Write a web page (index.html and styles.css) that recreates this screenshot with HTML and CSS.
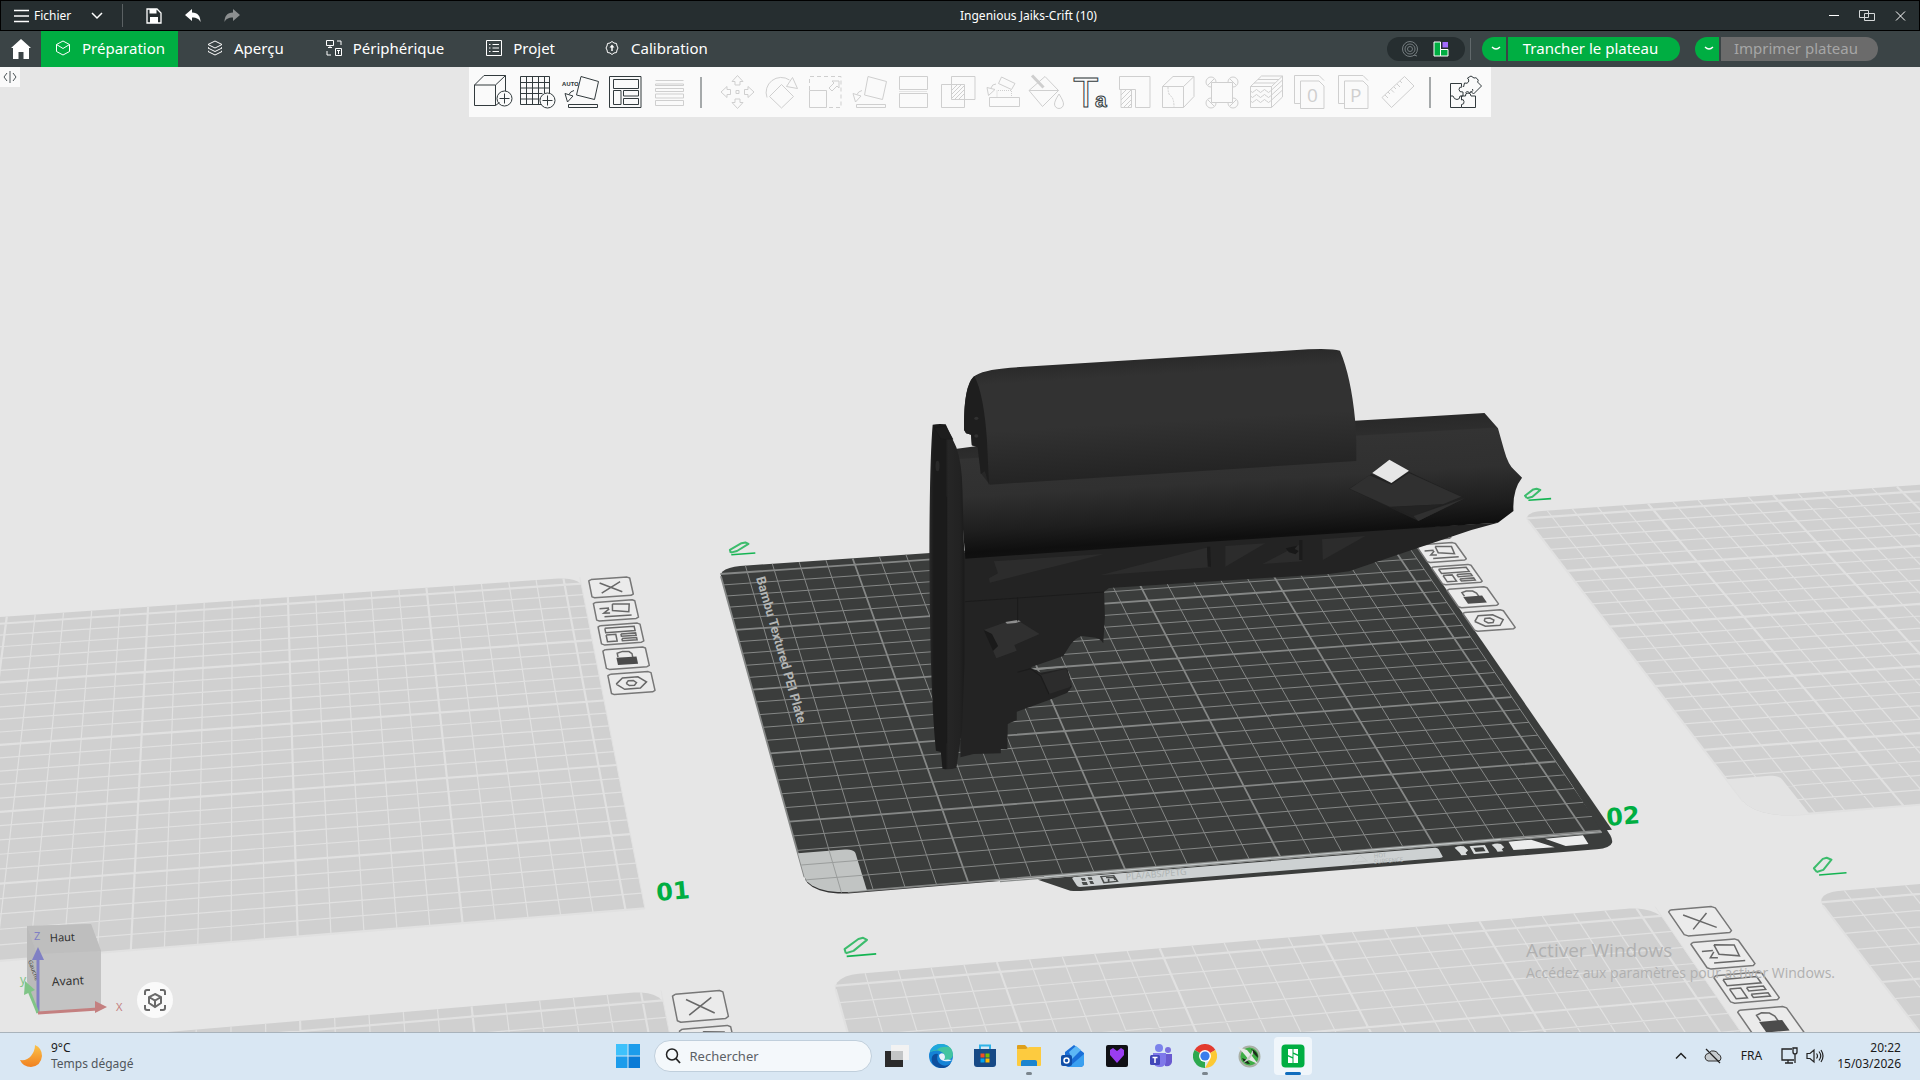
FILE: index.html
```html
<!DOCTYPE html>
<html lang="fr">
<head>
<meta charset="utf-8">
<title>Ingenious Jaiks-Crift (10)</title>
<link rel="stylesheet" href="styles.css">
</head>
<body>
<header class="titlebar">
  <div class="title-left">
    <button class="file-btn"><svg width="16" height="14" viewBox="0 0 16 14"><path d="M0 1.500h15M0 7h15M0 12.500h15" stroke="#fff" stroke-width="1.300"/></svg>Fichier</button>
    <button class="plain chev" aria-label="Menu"><svg width="12" height="8" viewBox="0 0 12 8"><path d="M1 1l5 5 5-5" fill="none" stroke="#fff" stroke-width="1.500"/></svg></button>
    <span class="title-sep"></span>
    <button class="plain save" aria-label="Enregistrer"><svg width="16" height="16" viewBox="0 0 16 16"><path d="M1 1h10l4 4v10H1z" fill="none" stroke="#fff" stroke-width="1.300"/><path d="M3.500 1h7v4.500h-7zM4 9h8v6H4z" fill="#fff"/></svg></button>
    <button class="plain undo" aria-label="Annuler"><svg width="16" height="14" viewBox="0 0 16 14"><path d="M0 6l7-6v3.500c6 0 8.500 4 8.500 9.500C14 10 12 8.500 7 8.500V12z" fill="#fff"/></svg></button>
    <button class="plain redo" aria-label="Rétablir" disabled><svg width="16" height="14" viewBox="0 0 16 14"><path d="M16 6L9 0v3.500C3 3.500.5 7.500.5 13 2 10 4 8.500 9 8.500V12z" fill="#8c8f90"/></svg></button>
  </div>
  <h1 class="doc-title">Ingenious Jaiks-Crift (10)</h1>
  <div class="win-controls">
    <button class="plain" aria-label="Réduire"><svg width="16" height="16" viewBox="0 0 16 16"><path d="M3 7.500h10" stroke="#fff"/></svg></button>
    <button class="plain" aria-label="Restaurer"><svg width="16" height="16" viewBox="0 0 16 16"><path d="M.5 2.500h9v7h-9zM5.500 5.500h10v7h-10z" fill="none" stroke="#d5d8d9"/></svg></button>
    <button class="plain" aria-label="Fermer"><svg width="16" height="16" viewBox="0 0 16 16"><path d="M4 3.500l9 9m0-9l-9 9" stroke="#fff"/></svg></button>
  </div>
</header>
<nav class="navbar">
  <button class="plain home" aria-label="Accueil"><svg width="20" height="20" viewBox="0 0 20 20"><path d="M10 0L0 9h2v11h5.500v-7h5v7H18V9h2z" fill="#fff"/></svg></button>
  <div class="tabs">
    <button class="tab active"><svg width="16" height="16" viewBox="0 0 16 16"><path d="M8 1l6.500 3.500v7L8 15l-6.500-3.500v-7zM1.500 4.500L8 8.500l6.500-4"/></svg>Préparation</button>
    <button class="tab"><svg width="16" height="16" viewBox="0 0 16 16"><path d="M8 1l7 3.500L8 8 1 4.500zM2 7.500L1 8l7 3.500L15 8l-1-.5M2 11l-1 .5L8 15l7-3.500-1-.5"/></svg>Aperçu</button>
    <button class="tab"><svg width="16" height="16" viewBox="0 0 16 16"><path d="M.5.5h7v5h-7zM4 5.500v2M2 7.500h4M11 1h4v4M1 11v4h4M9.500 8.500h6v7h-6zM11 10.500h3M12.500 11v3"/></svg>Périphérique</button>
    <button class="tab"><svg width="16" height="16" viewBox="0 0 16 16"><path d="M.5.5h15v15H.5zM3 4.500h1.500m2 0H13M3 8h1.500m2 0H13M3 11.500h1.500m2 0H13"/></svg>Projet</button>
    <button class="tab"><svg width="16" height="16" viewBox="0 0 16 16"><path d="M8 1.500l2 1.500 2.500.5.5 2.500 1 2-1 2-.5 2.500L10 13l-2 1.500L6 13l-2.500-.5L3 10 2 8l1-2 .5-2.500L6 3z"/><path d="M8 11V7" stroke-width="1.500"/><path d="M5.500 7.500L8 4.500l2.500 3z" fill="#fff" stroke="none"/></svg>Calibration</button>
  </div>
  <div class="nav-actions">
    <div class="mode">
      <button class="plain" aria-label="Mode simple"><svg width="18" height="18" viewBox="0 0 18 18" fill="none" stroke="#747c7f"><circle cx="9" cy="9" r="7.500"/><circle cx="9" cy="9" r="5"/><circle cx="9" cy="9" r="2.500"/><path d="M13 15l3 1"/></svg></button>
      <button class="plain" aria-label="Mode avancé"><svg width="16" height="16" viewBox="0 0 16 16"><path d="M1 1h6.500v14H1z" fill="#00ae42" stroke="#fff"/><path d="M7.500 8.500H15V15H7.500z" fill="#00ae42" stroke="#fff"/><path d="M9.500 1H15v5.500H9.500z" fill="#a56bff"/></svg></button>
    </div>
    <span class="nav-sep"></span>
    <div class="split">
      <button class="split-arrow" aria-label="Options de tranchage"><svg width="10" height="6" viewBox="0 0 10 6"><path d="M1 1q4 4 8 0" fill="none" stroke="#fff" stroke-width="1.300"/></svg></button>
      <button class="split-main">Trancher le plateau</button>
    </div>
    <div class="split print">
      <button class="split-arrow" aria-label="Options d’impression"><svg width="10" height="6" viewBox="0 0 10 6"><path d="M1 1q4 4 8 0" fill="none" stroke="#fff" stroke-width="1.300"/></svg></button>
      <button class="split-main" disabled>Imprimer plateau</button>
    </div>
  </div>
</nav>
<main class="stage">
  <svg class="scene" viewBox="0 67 1920 965" preserveAspectRatio="xMidYMid slice" role="img" aria-label="Vue 3D du plateau">
    <defs>
      <linearGradient id="tube" gradientUnits="userSpaceOnUse" x1="800" y1="296" x2="825" y2="645">
        <stop offset="0" stop-color="#292929"/><stop offset=".12" stop-color="#2d2d2d"/><stop offset=".13" stop-color="#333"/><stop offset=".45" stop-color="#303030"/><stop offset=".75" stop-color="#1e1e1e"/><stop offset=".93" stop-color="#0f0f0f"/><stop offset="1" stop-color="#111"/>
      </linearGradient>
      <linearGradient id="cheek" gradientUnits="userSpaceOnUse" x1="650" y1="80" x2="675" y2="430">
        <stop offset="0" stop-color="#292929"/><stop offset=".15" stop-color="#323232"/><stop offset=".55" stop-color="#323232"/><stop offset="1" stop-color="#242424"/>
      </linearGradient>
      <linearGradient id="butt" gradientUnits="userSpaceOnUse" x1="72" y1="0" x2="160" y2="0">
        <stop offset="0" stop-color="#2a2a2a"/><stop offset=".12" stop-color="#1b1b1b"/><stop offset=".45" stop-color="#1b1b1b"/><stop offset=".52" stop-color="#262626"/><stop offset=".85" stop-color="#222"/><stop offset="1" stop-color="#191919"/>
      </linearGradient>
    </defs>
    <g id="beds"></g>

    <g transform="translate(1000 780) scale(.420918 .333333)">
      <path d="M90 299l77 33q10 2 25 1L1418 208q32-4 36-20 2-8-4-22L1363 0 1352 0 1430 157 105 296z" fill="#3b3d3c"/>
      <path d="M105 291L1190 178" stroke="#c3c8c8" stroke-width="4"/>
      <path d="M0 305L1430 157" stroke="#8a8d8c" stroke-width="4"/>
      <path d="M176 291L1034 203q6 0 8 5l10 22q0 3-8 4L190 321q-6 0-8-5l-10-20q-1-4 4-5z" fill="#cdd1d2"/>
      <path d="M192 294h10l2 8h-9zM208 292h10l2 7h-9zM194 306h12l3 9h-12zM212 303h8l4 9h-9z" fill="#4a4d4c"/>
      <path d="M240 290l30-3 9 17-32 4zM252 293l18-1 4 8M258 296v10" fill="none" stroke="#4a4d4c" stroke-width="4"/>
      <path d="M855 225l-18 22 36-4z" fill="none" stroke="#c0c5c5" stroke-width="2"/>
      <path d="M1080 203q8-8 22-4l10 12-6 8 4 6-14 1-4-8zM1168 194q12-6 22-2l8 10-6 6 4 6-14 1-4-8z" fill="#dadddd"/>
      <path d="M1120 201l30-3 8 18-30 3z" fill="none" stroke="#dadddd" stroke-width="6"/>
      <path d="M1208 185l54-6 56 23-98 8zM1295 176l90-10 13 26-54 6z" fill="#eceded"/>
    </g>
    <text class="bed-mark" transform="translate(1126 880) rotate(-5)" font-size="9">PLA/ABS/PETG</text>
    <text class="bed-mark" transform="translate(1374 858) rotate(-5)" font-size="6">HOT</text>
    <text class="bed-mark" transform="translate(1374 864) rotate(-5)" font-size="6">SURFENCE</text>
    <text class="bed-name" transform="translate(756 578) rotate(74)" font-size="13">Bambu Textured PEI Plate</text>
    <text class="bed-no" transform="translate(657 901) rotate(-5)">01</text>
    <text class="bed-no" transform="translate(1607 826) rotate(-5)">02</text>

    <g transform="translate(900 330) scale(.408163 .333333)">
      <path d="M150 670L1465 578 1400 600 1230 670 1100 724 1050 732 512 774 500 785 502 860 498 940Q490 922 470 922L445 918Q425 926 412 955L400 978 320 1012 345 1028 410 1014 421 1070 410 1088 370 1108 286 1145 286 1170 264 1182 263 1257 247 1257 247 1270 180 1272 148 1282z" fill="#232323"/>
      <path d="M230 694L500 672 220 758 218 745 240 730zM490 736L755 652 752 680 760 712zM797 648L895 640 797 710zM1034 628L1140 618 1036 690zM888 702L985 640 980 670 985 694z" fill="#2c2c2c"/>
      <path d="M752 650h8l2 60h-8zM978 630h8v60h-8z" fill="#1b1b1b"/>
      <path d="M945 655l28-8-6 10 10 6-8 10-16-6z" fill="#181818"/>
      <path d="M205 900L255 878 295 876 342 912 280 945 286 962 236 985 228 962 240 948 225 912z" fill="#303030"/>
      <path d="M258 876l30-6 8 4-12 5-22 2z" fill="#8e8e8e"/>
      <path d="M205 900l20 12 15 36-12 14z" fill="#1a1a1a"/>
      <path d="M288 802v72M160 815l340-29" stroke="#181818" stroke-width="2"/>
      <path d="M320 1018l25 18 20 56 50-20 6-10-14-46-60 18z" fill="#2c2c2c"/>
      <path d="M318 1016l80-7 2 3-60 8z" fill="#8c8e8d"/>
      <path d="M288 1027l32-11 25 22 20 54" fill="none" stroke="#1c1c1c" stroke-width="3"/>
      <path d="M135 357L190 348 1115 272 1432 249 1465 295 1480 360Q1490 405 1505 420L1524 443Q1500 480 1503 543L1465 578 1300 592 700 640 160 686 148 500z" fill="url(#tube)"/>
      <path d="M220 464L1118 393 1118 330 1115 270Q1105 140 1078 62 1060 55 1000 58L270 113Q200 120 180 140 155 170 157 300L162 310 174 314 176 346 192 350 198 430z" fill="url(#cheek)"/>
      <path d="M182 138Q155 170 157 300L162 310 174 314 176 346 190 352 198 432 208 424 218 464 213 330Q205 190 182 138z" fill="#1e1e1e"/>
      <circle cx="187" cy="265" r="5" fill="#313131"/><circle cx="187" cy="318" r="5" fill="#313131"/>
      <path d="M1155 432L1100 476 1270 573 1384 505 1247 425 1204 459z" fill="#222"/>
      <path d="M1150 436L1102 476 1200 530 1330 523 1375 500 1247 429 1204 464z" fill="#303030"/>
      <path d="M1205 532L1330 523 1258 558z" fill="#232323"/>
      <path d="M1258 558L1384 505 1270 573z" fill="#303030"/>
      <path d="M1199 389L1247 422 1204 459 1157 429z" fill="#e6e6e6"/>
      <path d="M80 284Q95 280 112 283L138 352Q152 400 153 480L158 700V1000L152 1200 138 1314Q120 1320 104 1316L100 1266 88 1262Q74 1100 72 700 72 400 80 284z" fill="url(#butt)"/>
      <path d="M84 294l28-6 18 40-30-1zM114 500V1240" fill="#1d1d1d" stroke="#161616"/>
      <ellipse cx="92" cy="408" rx="5" ry="16" fill="#292929"/>
    </g>

    <g class="gizmo">
      <path d="M27 926l64-2 10 27v57l-63 5-11-32z" fill="#c3c3c3"/>
      <path d="M27 926l64-2 10 27-64 3z" fill="#bebebe"/>
      <path d="M27 926l10 28 1 59-11-32z" fill="#bababa"/>
      <text transform="translate(50 942) rotate(-3)" font-size="11" fill="#333">Haut</text>
      <text transform="translate(52 986) rotate(-3)" font-size="12" fill="#333">Avant</text>
      <text transform="translate(28 961) rotate(70)" font-size="6" fill="#444">Gauche</text>
      <path d="M38 1013V955" stroke="#8080c4" stroke-width="3"/><path d="M38 947l6 13H32z" fill="#8080c4"/>
      <path d="M38 1013l-9-22" stroke="#80c487" stroke-width="3"/><path d="M25 981l10 9-11 5z" fill="#80c487"/>
      <path d="M38 1013l60-4" stroke="#c48080" stroke-width="3"/><path d="M107 1007l-12-6v12z" fill="#c48080"/>
      <text x="34" y="940" font-size="11" fill="#8080c4">Z</text><text x="116" y="1011" font-size="11" fill="#c48080">X</text><text x="20" y="984" font-size="12" fill="#80c487">y</text>
    </g>
    <g class="watermark"><text x="1526" y="957" font-size="19">Activer Windows</text><text x="1526" y="978" font-size="14">Accédez aux paramètres pour activer Windows.</text></g>
  </svg>
  <div class="stage-top">
    <button class="expander" aria-label="Afficher le panneau"><svg width="14" height="12" viewBox="0 0 14 12"><path d="M4 2L1 6l3 4M7 0v12M10 2l3 4-3 4" fill="none" stroke="#4a5356"/></svg></button>
    <div class="toolbar" role="toolbar">
      <button aria-label="Ajouter"><svg viewBox="0 0 40 40"><path d="M1.500 13h21v20.500h-21zM1.500 13l9.500-9.500h21.500L22.500 13M32.500 3.500V19M22.500 33.500l4-3"/><circle cx="31.500" cy="26.500" r="7.500"/><path d="M26.500 26.500h10m-5-5v10"/></svg></button>
      <button aria-label="Ajouter un plateau"><svg viewBox="0 0 40 40"><path d="M3.500 4.500h29v28h-29zM9.500 4.500v28m6-28v28m6-28v28m6-28v17M3.500 10.500h29m-29 5.500h29m-29 5.500h22m-22 5.500h19"/><circle cx="30.500" cy="28.500" r="7.500" fill="#fafafa"/><path d="M25.500 28.500h10m-5-5v10"/></svg></button>
      <button aria-label="Orientation automatique"><svg viewBox="0 0 40 40"><path d="M20 4.500l17.500 5-4 18-18-4.500zM7.500 32.500h29v3h-29zM13 18.500q-4 1-5 4M4 21.500l8 2.500-5.500 6z"/><text class="micro" x="1" y="14" font-size="6">AUTO</text></svg></button>
      <button aria-label="Organiser"><svg viewBox="0 0 40 40"><path d="M4.500 4.500h31.500v31H4.500zM8.500 7.500h25v9h-25zM8.500 18.500H16v14H8.500zM18.500 18.500h15V24h-15zM18.500 26.500h15v6h-15z"/></svg></button>
      <button class="off" aria-label="Couches variables" disabled><svg viewBox="0 0 40 40"><path d="M6.500 8.500h28M6.500 12h28v1.500h-28zM6.500 16.500h28v3h-28zM6.500 22h28v4h-28zM6.500 28.500h28v5h-28z"/></svg></button>
      <span class="tool-sep"></span>
      <button class="off" aria-label="Déplacer" disabled><svg viewBox="0 0 40 40"><path d="M18 18.500h3v3h-3zM19.500 3.500l5.500 6h-3V13h-5V9.500h-3zM19.500 36.500l5.500-6h-3V27h-5v3.500h-3zM3 20l6-5.500v3h3.500v5H9v3zM36 20l-6-5.500v3h-3.500v5H30v3z"/></svg></button>
      <button class="off" aria-label="Pivoter" disabled><svg viewBox="0 0 40 40"><path d="M19.500 12.500l12 12-12 11.500-12-11.500zM5 25.500A15 15 0 0 1 27.500 8M30.500 5.500l5 11-11-2z"/></svg></button>
      <button class="off" aria-label="Redimensionner" disabled><svg viewBox="0 0 40 40"><path d="M3.500 18.500h17v17h-17zM23 16l5-5-2-2h7v7l-2-2-5 5z"/><path stroke-dasharray="4 3" d="M3.500 18V4.500H35v31H21"/></svg></button>
      <button class="off" aria-label="Poser sur une face" disabled><svg viewBox="0 0 40 40"><path d="M18 4.500l18.500 5-4 18-18-4.500zM6.500 32.500h29v3h-29zM12 18.500q-4 1-5 4M3 21.500l8 2.500-5.500 6z"/></svg></button>
      <button class="off" aria-label="Couper" disabled><svg viewBox="0 0 40 40"><path d="M5.500 4.500h28v13h-28zM5.500 21.500h28v14h-28z"/><path stroke-dasharray="1 1" d="M5.500 19.500h28"/></svg></button>
      <button class="off" aria-label="Opération booléenne" disabled><svg viewBox="0 0 40 40"><path d="M13.500 4.500H37v23H13.500zM3.500 12.500H26.500v23H3.500zM14 18l5-5M14 22l9-9M14 26l12-12M17 27l9-9M21 27l5-5"/></svg></button>
      <button class="off" aria-label="Supports" disabled><svg viewBox="0 0 40 40"><path d="M7.500 25.500h30v9h-30zM19.500 5L33 11.500l-3.500 6-13-6zM5 15.500l8 2-6.500 6zM14 12q-4 0-5 4"/><path stroke-dasharray="1 1" d="M15 25.500v-7h14.500v7"/></svg></button>
      <button class="off" aria-label="Peinture" disabled><svg viewBox="0 0 40 40"><path d="M19 4.500l13.500 14-16 16-13.500-16zM3 18.500h29.500M33 22q-4.500 7-4.500 10a4.500 4.500 0 0 0 9 0q0-3-4.500-10z"/><path d="M6 3.500l11.500 12" stroke-width="3"/></svg></button>
      <button aria-label="Texte"><svg viewBox="0 0 40 40"><text class="outline" x="3" y="35" font-size="42" font-family="Liberation Sans">T<tspan x="25" font-size="21" font-weight="700">a</tspan></text></svg></button>
      <button class="off" aria-label="Tour" disabled><svg viewBox="0 0 40 40"><path d="M5.500 4.500H36V35.500H21.500V17.500H5.500zM7 17.500h10.500v18H7zM7 23l5-5M7 28l10-10M7 33l10-10M10 35l7-7M14 35l3-3"/></svg></button>
      <button class="off" aria-label="Couture" disabled><svg viewBox="0 0 40 40"><path d="M4.500 14.500h21v21h-21zM4.500 14.500l10.500-10h21l-10.500 10M36 4.500v20l-10.500 11"/><path stroke-dasharray="2 1" d="M10 15q0 8 3 9 3 3 3 11"/></svg></button>
      <button class="off" aria-label="Oreilles de bordure" disabled><svg viewBox="0 0 40 40"><circle cx="9" cy="10" r="5"/><circle cx="31" cy="10" r="5"/><circle cx="9" cy="31" r="5"/><circle cx="31" cy="31" r="5"/><path d="M6 13l6-6M28 7l6 6M6 28l6 6M28 34l6-6"/><path d="M9.500 10.500h21v20h-21z" fill="#fafafa"/></svg></button>
      <button class="off" aria-label="Surface irrégulière" disabled><svg viewBox="0 0 40 40"><path d="M4.500 14.500h21v21h-21zM4.500 14.500L15.500 4h21l-11 10.500M36.500 4v21l-11 10.500M8 11h21M12 7.500h21"/><path d="M4.500 19q2 3 4 0t4 0 4 0 4 0 4 0l12-11M4.500 24q2 3 4 0t4 0 4 0 4 0 4 0l12-11M4.500 29q2 3 4 0t4 0 4 0 4 0 4 0l12-11"/></svg></button>
      <button class="off" aria-label="Calque O" disabled><svg viewBox="0 0 40 40"><path d="M10.500 31.500h-6v-28H29l5 5M10.500 9H29l5 5v22.500H10.500z"/><text class="letter" x="17" y="30" font-size="19">0</text></svg></button>
      <button class="off" aria-label="Calque P" disabled><svg viewBox="0 0 40 40"><path d="M10.500 31.500h-6v-28H29l5 5M10.500 9H29l5 5v22.500H10.500z"/><text class="letter" x="16" y="30" font-size="19">P</text></svg></button>
      <button class="off" aria-label="Mesurer" disabled><svg viewBox="0 0 40 40"><path d="M26.500 4.500l9.500 9.500-22.500 21.500-9.500-10zM7 23l3 3M10 20l2 2M13 17.500l3 3M16 15l2 2M19 12l3 3M22 9l2 2"/></svg></button>
      <span class="tool-sep"></span>
      <button aria-label="Assemblage"><svg viewBox="0 0 40 40"><path d="M14.500 14v-2.500h-11V24h2.500q1 3.500 4 3.500t3-3.500h3v-4q-4 .5-4-2.500t3-2.500zM3.500 24v11.500h11v-3q3 0 2.500-3t-2.500-1.500V24M14.500 35.500h14V24H24q0-3-3-3t-2.500 3h-4M18.500 20.500l2-1q2 2 4 .5t1-3M16.500 15l1-4q3 1 4-1t-1-4l3.500-2 3 2q2-1 3.500 1t0 3l4 4-8 8-3-3"/></svg></button>
    </div>
  </div>
  <button class="fit" aria-label="Recentrer la vue"><svg width="22" height="22" viewBox="0 0 22 22"><path d="M1 6V3q0-2 2-2h3M16 1h3q2 0 2 2v3M21 16v3q0 2-2 2h-3M6 21H3q-2 0-2-2v-3M11 5l6 3v6l-6 4-6-4V8zM5 8l6 3.500L17 8M11 11.500V18"/></svg></button>
</main>
<footer class="taskbar">
  <button class="weather"><svg width="24" height="24" viewBox="0 0 24 24"><defs><linearGradient id="moon" x1="0" y1="0" x2="0" y2="1"><stop offset="0" stop-color="#fbc34a"/><stop offset="1" stop-color="#f08020"/></linearGradient></defs><path d="M16 1q7 3 7 11-1 10-11 11Q4 23 1 16q7 1 11-4t4-11z" fill="url(#moon)"/></svg><span class="two-lines"><span>9°C</span><span class="muted">Temps dégagé</span></span></button>
  <div class="apps">
    <button class="app" aria-label="Démarrer"><svg width="24" height="24" viewBox="0 0 24 24"><path d="M0 0h11.500v11.500H0z" fill="#3ec1fb"/><path d="M12.500 0H24v11.500H12.500zM0 12.500h11.500V24H0z" fill="#1c9ceb"/><path d="M12.500 12.500H24V24H12.500z" fill="#0a7bd6"/></svg></button>
    <label class="search"><svg width="16" height="16" viewBox="0 0 16 16"><circle cx="7" cy="6.500" r="5.500" fill="none" stroke="#222" stroke-width="1.500"/><path d="M11 10.500l4 4.500" stroke="#222" stroke-width="1.800"/></svg><input type="text" placeholder="Rechercher" aria-label="Rechercher"></label>
    <button class="app" aria-label="Vue des tâches"><svg width="24" height="24" viewBox="0 0 24 24"><path d="M0 7h18v16H0z" fill="#2b2b2b"/><path d="M6 1h18v15H6z" fill="#f2f2f2"/><path d="M6 7h12v9H6z" fill="#c3c5c6"/></svg></button>
    <button class="app" aria-label="Edge"><svg width="24" height="24" viewBox="0 0 24 24"><circle cx="12" cy="12" r="12" fill="#1583d6"/><path d="M1 8Q5-1 14 .2 24 2 24 11q-1 6-9 5 2-3 0-6Q10 4 1 8z" fill="#42c4a0"/><path d="M1 8Q3 0 12 0q5 0 8 3-9-1-12 3-4 0-7 2z" fill="#1fa8dd"/><path d="M9 10q-3 8 4 11 5 2 9-2-4 6-11 5Q1 22 3 13q2-4 6-3z" fill="#0d4f9e"/><path d="M15 10q-3-2-5 1 0 5 5 6 5 1 8-1-4-1-8 0 2-3 0-6z" fill="#e7f2fa"/></svg></button>
    <button class="app" aria-label="Store"><svg width="24" height="24" viewBox="0 0 24 24"><path d="M7 6V1.500h10V6" fill="none" stroke="#2fb3e8" stroke-width="2"/><path d="M1 5h22v15q0 3-3 3H4q-3 0-3-3z" fill="#174a86"/><path d="M7.500 9.500h4v4h-4z" fill="#f25022"/><path d="M12.500 9.500h4v4h-4z" fill="#7fba00"/><path d="M7.500 14.500h4v4h-4z" fill="#00a4ef"/><path d="M12.500 14.500h4v4h-4z" fill="#ffb900"/></svg></button>
    <button class="app running" aria-label="Explorateur"><svg width="24" height="24" viewBox="0 0 24 24"><path d="M0 2q0-1 1-1h7l3 3h12q1 0 1 1v8H0z" fill="#dfa01b"/><path d="M0 5h9l3-2h12v18q0 1-1 1H1q-1 0-1-1z" fill="#fdcb3f"/><path d="M4 22v-4q0-2 2-2h12q2 0 2 2v4z" fill="#1b84cf"/></svg></button>
    <button class="app" aria-label="Outlook"><svg width="24" height="24" viewBox="0 0 24 24"><path d="M4 8L13 1l10 8v10q0 4-4 4H8q-4 0-4-4z" fill="#1a6fd8"/><path d="M8 8l7-6 5 4-9 9z" fill="#5db7f5"/><path d="M23 10v9q0 4-4 4H8z" fill="#3aa0f0"/><rect x="0" y="11" width="11" height="11" rx="2" fill="#114fa8"/><circle cx="5.500" cy="16.500" r="2.500" fill="none" stroke="#fff" stroke-width="1.500"/></svg></button>
    <button class="app" aria-label="Cœur"><svg width="24" height="24" viewBox="0 0 24 24"><rect x="1" y="1" width="22" height="22" rx="2" fill="#101014"/><path d="M12 19L5 11V6l3-2 4 3 4-3 3 2v5z" fill="#9a3df2"/></svg></button>
    <button class="app" aria-label="Teams"><svg width="24" height="24" viewBox="0 0 24 24"><circle cx="10" cy="4" r="4" fill="#7b83eb"/><circle cx="19" cy="6" r="3" fill="#7b70dd"/><path d="M14 10h9v8q-1 5-7 4z" fill="#6a5ad0"/><path d="M4 9h13v9q-1 5-6 5-6 0-7-5z" fill="#7f78ea"/><rect x="1" y="11" width="10" height="10" rx="1.500" fill="#4046b8"/><path d="M3.500 13.500h5M6 13.500V19" stroke="#fff" stroke-width="1.500"/></svg></button>
    <button class="app running" aria-label="Chrome"><svg width="24" height="24" viewBox="0 0 24 24"><path d="M12 12L1.600 6a12 12 0 0 1 20.800 0z" fill="#e33b2e"/><path d="M12 12V24A12 12 0 0 1 1.600 6z" fill="#2da94f"/><path d="M12 12l10.400-6A12 12 0 0 1 12 24l5-9z" fill="#fcc934"/><circle cx="12" cy="12" r="6" fill="#fff"/><circle cx="12" cy="12" r="4.600" fill="#3b7ded"/></svg></button>
    <button class="app" aria-label="Jeu"><svg width="24" height="24" viewBox="0 0 24 24"><circle cx="12.500" cy="12.500" r="10" fill="#3fae45" stroke="#a9b0a6" stroke-width="2"/><path d="M14 5q7 2 7 9l-4-4zM5 14q2 6 8 6l-3-4z" fill="#1d2a1c"/><path d="M1 3l9 3 5 6 6 8-9-4-4-5z" fill="#e6e9e6"/><path d="M16 6l-3 5-7 8 6-3 4-6z" fill="#c7cdc6"/></svg></button>
    <button class="app current" aria-label="Studio"><svg width="24" height="24" viewBox="0 0 24 24"><rect x=".5" y=".5" width="23" height="23" rx="4" fill="#00ae42"/><path d="M7 5h4.500v8L7 11zM12.500 5H17v5.500l-4.500-2zM7 12.500l4.500 2V19H7zM12.500 10l4.500 2V19h-4.500z" fill="#fff"/></svg></button>
  </div>
  <div class="tray">
    <button class="plain" aria-label="Icônes cachées"><svg width="12" height="8" viewBox="0 0 12 8"><path d="M1 6.500l5-5 5 5" fill="none" stroke="#222" stroke-width="1.500"/></svg></button>
    <button class="plain cloud" aria-label="OneDrive"><svg width="18" height="16" viewBox="0 0 18 16"><path d="M4 13q-3-1-3-4t4-4q2-3 5-2 3 0 4 3 3 1 3 4t-3 3z" fill="#c7cccf" stroke="#333"/><path d="M2 1l14 14" stroke="#222" stroke-width="1.300"/></svg></button>
    <span class="lang">FRA</span>
    <button class="plain net" aria-label="Réseau"><svg width="18" height="18" viewBox="0 0 18 18"><path d="M11 2H1v11h12M7 13v3M4 16h8M12 1h4v4q0 2-2 2t-2-2zM14 7v9" fill="none" stroke="#222" stroke-width="1.300"/></svg></button>
    <button class="plain vol" aria-label="Volume"><svg width="18" height="16" viewBox="0 0 18 16"><path d="M1 5.500h3l4-3.500v12l-4-3.500H1zM10.500 5.500q2 2.500 0 5M13 3.500q3.500 4.500 0 9M15 2q4 6 0 12" fill="none" stroke="#222" stroke-width="1.200"/></svg></button>
    <span class="two-lines clock"><span>20:22</span><span>15/03/2026</span></span>
  </div>
</footer>
<script src="scene.js"></script>
</body>
</html>
```
FILE: styles.css
```css
* { box-sizing: border-box; }
html, body { height: 100%; }
body {
  margin: 0;
  display: flex;
  flex-direction: column;
  overflow: hidden;
  font-family: "Noto Sans", "Open Sans", sans-serif;
  font-size: 12px;
  background: #e6e6e6;
}
button { font: inherit; color: inherit; border: 0; padding: 0; background: none; display: flex; align-items: center; }
svg { display: block; flex: none; }

.titlebar { flex: none; display: flex; align-items: center; height: 31px; background: #262e30; color: #fff; border: 1px solid #000; }
.title-left { flex: 0 0 50%; display: flex; align-items: center; padding-left: 13px; }
.file-btn { gap: 4px; }
.chev { margin-left: 20px; }
.title-sep { width: 1px; height: 23px; background: #5b6163; margin: 0 23px 0 19px; }
.undo, .redo { margin-left: 23px; }
.doc-title { margin: 0; font-size: 12px; font-weight: 400; flex: 1; white-space: nowrap; }
.win-controls { display: flex; gap: 17px; padding-right: 11px; }

.navbar { flex: none; display: flex; align-items: stretch; height: 36px; background: #3b4446; color: #fff; font-size: 15px; line-height: 20px; }
.home { padding: 0 10px 0 11px; }
.tabs { display: flex; gap: 15px; }
.tab { padding: 0 13px 2px 14px; gap: 11px; }
.tab:last-child { margin-left: 7px; }
.tab svg { fill: none; stroke: #fff; }
.tab.active { background: #00ae42; }
.nav-actions { display: flex; align-items: center; margin-left: auto; padding-right: 42px; }
.mode { display: flex; align-items: center; gap: 14px; height: 24px; width: 78px; padding-left: 14px; border-radius: 12px; background: #262e30; }
.nav-sep { width: 1px; height: 22px; background: #61696b; margin: 0 11px 0 5px; }
.split { display: flex; gap: 2px; height: 24px; }
.split + .split { margin-left: 15px; }
.split-arrow { width: 24px; justify-content: center; background: #00ae42; border-radius: 12px 0 0 12px; padding-left: 4px; }
.split-main { width: 172px; justify-content: center; padding: 0 7px 2px 0; background: #00ae42; border-radius: 0 12px 12px 0; white-space: nowrap; }
.print .split-main { width: 157px; background: #6b6b6b; color: #a6a6a6; }

.stage { flex: 1; position: relative; min-height: 0; }
.scene { position: absolute; inset: 0; width: 100%; height: 100%; }
.stage-top { position: absolute; top: 0; left: 0; right: 0; display: flex; align-items: flex-start; }
.expander { width: 20px; height: 20px; background: #fafafa; justify-content: center; margin-right: 20px; }
.toolbar { display: flex; align-items: center; gap: 4px; height: 50px; padding: 0 4px; margin: 0 auto; background: #fafafa; }
.toolbar svg { width: 40px; height: 40px; overflow: visible; fill: none; stroke: #323a3d; }
.toolbar .off svg { stroke: #cfcfcf; }
.tool-sep { width: 21px; height: 31px; display: flex; }
.tool-sep::before { content: ""; width: 2px; height: 100%; margin-left: 7px; background: #a5a9aa; }
.micro { fill: #323a3d; stroke: none; font-weight: 700; }
.letter { fill: #cfcfcf; stroke: none; font-family: "Open Sans", sans-serif; }
.fit { position: absolute; left: 137px; bottom: 14px; width: 36px; height: 36px; justify-content: center; border-radius: 50%; background: #fafafa; }
.fit svg { fill: none; stroke: #6a6a6a; stroke-width: 2; }

.bed-no { font: 700 24px "DejaVu Sans", sans-serif; fill: #00ae42; }
.bed-name { font-family: Roboto, sans-serif; font-weight: 700; fill: #b4b6b5; }
.bed-mark { fill: #aeb3b3; }
.watermark { fill: #b0b0b0; font-family: "Open Sans", sans-serif; }

.taskbar { flex: none; display: grid; grid-template-columns: 1fr auto 1fr; align-items: center; height: 48px; padding-bottom: 2px; background: #d9e7f3; border-top: 1px solid #a9b3bb; color: #1b1b1b; }
.weather { gap: 8px; padding-left: 19px; text-align: left; }
.two-lines { display: flex; flex-direction: column; line-height: 16px; }
.muted { color: #50565b; }
.apps { display: flex; align-items: center; }
.app { position: relative; width: 44px; height: 38px; justify-content: center; }
.search { display: flex; align-items: center; gap: 9px; width: 218px; height: 32px; margin: 0 3px 0 4px; padding: 0 10px; border: 1px solid #c0cfdc; border-radius: 16px; background: #f4f8fb; }
.search input { flex: 1; min-width: 0; border: 0; padding: 0; background: none; font: inherit; font-size: 13px; outline: 0; }
.search input::placeholder { color: #5c6166; opacity: 1; }
.running::after, .current::after { content: ""; position: absolute; bottom: 0; left: 19px; width: 6px; height: 3px; border-radius: 2px; background: #7b858d; }
.current::before { content: ""; position: absolute; inset: 0 3px; border-radius: 4px; background: #f0f6fb; }
.current svg { position: relative; }
.current::after { left: 14px; width: 16px; background: #0f6cbd; }
.tray { display: flex; align-items: center; justify-content: flex-end; padding-right: 19px; }
.cloud { margin: 0 19px 0 17px; }
.net { margin: 0 7px 0 19px; }
.vol { margin-right: 13px; }
.clock { text-align: right; }
```
FILE: scene.js
```js
// Draws the build plates: a flat grid seen in perspective.
// Anchors pair a point of the bed plane (mm) with its place on the canvas;
// the camera is the least-squares fit through all of them.
const anchors = [
  [0, 250, 721.5, 573], [0, 200, 735.7, 629], [0, 150, 753.3, 689.3],
  [0, 100, 771.3, 752.3], [0, 50, 790, 821.3], [100, 0, 1125.4, 868.3],
  [150, 0, 1279.9, 856], [200, 0, 1433.5, 843], [256, 0, 1602, 832],
  [256, 100, 1511.5, 698], [256, 150, 1468.5, 637], [256, 200, 1429.5, 581.5],
  [307.2, 250, 1527.4, 518.3], [307.2, 200, 1567.7, 570], [307.2, 150, 1609, 626],
  [307.2, 100, 1655.5, 686.7], [307.2, 50, 1705.4, 750],
  [-51.2, 200, 592, 640.7], [-51.2, 150, 603, 702.3], [-51.2, 100, 616, 766],
  [-51.2, 50, 629.3, 835], [-51.2, 0, 644, 908], [0, -57.2, 836, 986]
];
const MM = 100, PX = 1000;

function solve(rows) {
  const n = rows.length;
  for (let i = 0; i < n; i++) {
    let p = i;
    for (let r = i + 1; r < n; r++) if (Math.abs(rows[r][i]) > Math.abs(rows[p][i])) p = r;
    [rows[i], rows[p]] = [rows[p], rows[i]];
    for (let r = 0; r < n; r++) {
      if (r === i) continue;
      const f = rows[r][i] / rows[i][i];
      for (let c = i; c <= n; c++) rows[r][c] -= f * rows[i][c];
    }
  }
  return rows.map((row, i) => row[n] / row[i]);
}

const equations = anchors.flatMap(([mx, my, px, py]) => {
  const x = mx / MM, y = my / MM, u = px / PX, v = py / PX;
  return [
    [x, y, 1, 0, 0, 0, -u * x, -u * y, u],
    [0, 0, 0, x, y, 1, -v * x, -v * y, v]
  ];
});
const normal = Array.from({ length: 8 }, (_, i) =>
  Array.from({ length: 9 }, (_, j) => equations.reduce((sum, e) => sum + e[i] * e[j], 0)));
const h = solve(normal);

function project(mx, my) {
  const x = mx / MM, y = my / MM;
  const w = (h[6] * x + h[7] * y + 1) / PX;
  return ((h[0] * x + h[1] * y + h[2]) / w).toFixed(1) + " " + ((h[3] * x + h[4] * y + h[5]) / w).toFixed(1);
}

const PITCH = 307.2;
const SIZE = 256;
const beds = document.getElementById("beds");
let markup = "";

function poly(ox, oy, points, close) {
  return "M" + points.map(([x, y]) => project(ox + x, oy + y)).join("L") + (close ? "Z" : "");
}
function path(d, attrs) { markup += `<path d="${d}" ${attrs}/>`; }

function corner(cx, cy, r, from) {
  const out = [];
  for (let k = 0; k <= 6; k++) {
    const a = (from - k * 15) * Math.PI / 180;
    out.push([cx + r * Math.cos(a), cy + r * Math.sin(a)]);
  }
  return out;
}

function bed(col, row, dark) {
  const ox = col * PITCH, oy = row * PITCH;
  const fill = dark ? "#3b3d3c" : "#d0d0d0";
  const line = dark ? "#858786" : "#e1e1e1";
  const right = dark ? 259 : SIZE;
  if (dark) path(poly(ox, oy - 1, [[60, 0], ...corner(12, 12, 12, 270)], true), `fill="#333"`);
  path(poly(ox, oy, [...corner(8, 248, 8, 180), ...corner(right - 8, 248, 8, 90), [right, 0], ...corner(12, 12, 12, 270)], true), `fill="${fill}"`);
  let thin = "", bold = "";
  for (let i = 0; i <= 25; i++) {
    const seg = poly(ox, oy, [[i * 10, i ? 0 : 12], [i * 10, i ? SIZE : 248]]) + poly(ox, oy, [[i ? 0 : 12, i * 10], [SIZE, i * 10]]);
    if (i % 5 === 0) bold += seg; else thin += seg;
  }
  const scale = dark ? 1 : 1.2;
  path(thin, `fill="none" stroke="${line}" stroke-width="${scale}"`);
  path(bold, `fill="none" stroke="${line}" stroke-width="${scale * 1.8}"`);
  path(poly(ox, oy, [[SIZE, 0], [SIZE, SIZE]]), `fill="none" stroke="${line}"`);
  path(poly(ox, oy, [[0, 28], ...corner(15, 25, 3, 90), [18, 0], ...corner(12, 12, 12, 270)], true), `fill="${dark ? "#c1c4c3" : "#e3e3e3"}"`);
  if (dark) path(poly(ox, oy, [[0, 20], [18, 20]]) + poly(ox, oy, [[0, 10], [18, 10]]) + poly(ox, oy, [[10, 0], [10, 28]]), `fill="none" stroke="#9a9d9c"`);
  icons(ox + 259, oy + 253);
  path(poly(ox, oy, [[6, 267], [15, 267]]), `fill="none" stroke="#14b452" stroke-width="1.600"`);
  path(poly(ox, oy, [[6, 269], [6, 271.5], [11, 277], [12.5, 277.5], [13.5, 276], [8.5, 270], [6, 269]]), `fill="none" stroke="#3cbc6c" stroke-width="2" stroke-linejoin="round"`);
}

// Icon strokes live in a unit square, y downwards.
const frame = [[.06, 0], [.94, 0], [1, .06], [1, .94], [.94, 1], [.06, 1], [0, .94], [0, .06], [.06, 0]];
const glyphs = [
  [[[.25, .22], [.75, .78]], [[.75, .22], [.25, .78]]],
  [[[.45, .15], [.85, .22], [.8, .62], [.42, .5], [.45, .15]], [[.2, .8], [.85, .8]], [[.35, .4], [.2, .6], [.35, .62]], [[.12, .35], [.35, .35]]],
  [[[.15, .15], [.85, .15], [.85, .38], [.15, .38], [.15, .15]], [[.15, .5], [.38, .5], [.38, .85], [.15, .85], [.15, .5]], [[.5, .5], [.85, .5], [.85, .62], [.5, .62], [.5, .5]], [[.5, .74], [.85, .74], [.85, .86], [.5, .86], [.5, .74]]],
  [[[.32, .42], [.32, .22], [.45, .15], [.6, .18], [.66, .3], [.66, .48]]],
  [[[.15, .5], [.32, .22], [.68, .22], [.85, .5], [.68, .78], [.32, .78], [.15, .5]], [[.38, .5], [.44, .38], [.56, .38], [.62, .5], [.56, .62], [.44, .62], [.38, .5]]]
];
function icons(x, y) {
  glyphs.forEach((strokes, i) => {
    const place = pts => poly(x, y - i * 20.6, pts.map(([a, b]) => [a * 15, -b * 16.5]));
    path(place(frame), `fill="#ebebeb" stroke="#777" stroke-width="1.500" stroke-linejoin="round"`);
    path(strokes.map(place).join(""), `fill="none" stroke="#686868" stroke-width="1.500"`);
    if (i === 3) path(place([[.28, .45], [.75, .45], [.75, .82], [.28, .82]]), `fill="#4c4c4c"`);
  });
}

[[-1, 0], [1, 0], [-1, -1], [0, -1], [1, -1]].forEach(([c, r]) => bed(c, r, false));
bed(0, 0, true);
beds.innerHTML = markup;
```
